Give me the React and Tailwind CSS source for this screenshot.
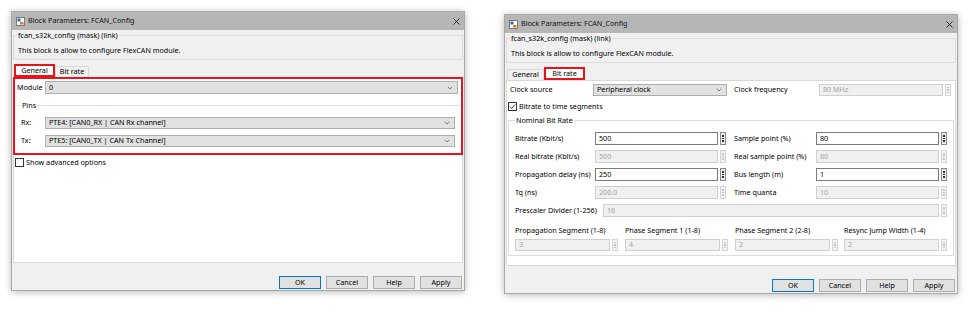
import React from 'react';

const Chevron = () => (
  <svg width="6" height="4" viewBox="0 0 6 4" className="shrink-0">
    <path d="M0.8 0.8 L3 3 L5.2 0.8" fill="none" stroke="#707070" strokeWidth="0.9" />
  </svg>
);

const Combo = ({ value, className = '' }) => (
  <div className={`flex items-center justify-between bg-[#e1e1e1] border border-[#adadad] pl-[3px] pr-[4px] ${className}`}>
    <span>{value}</span>
    <Chevron />
  </div>
);

const Dots = ({ disabled }) => (
  <div className={`w-[6px] h-full shrink-0 border flex flex-col items-center justify-center gap-[1px] ${disabled ? 'border-[#d4d4d4] bg-[#f3f3f3]' : 'border-[#8a8a8a] bg-[#ececec]'}`}>
    {[0, 1, 2].map(i => (
      <span key={i} className={`w-[1.5px] h-[1.5px] ${disabled ? 'bg-[#c4c4c4]' : 'bg-[#333333]'}`} />
    ))}
  </div>
);

const Field = ({ value, disabled, className = '' }) => (
  <div className={`flex items-stretch gap-[2px] h-[13px] ${className}`}>
    <div className={`flex-1 flex items-center pl-[3px] border ${disabled ? 'bg-[#f0f0f0] border-[#cfcfcf] text-[#a3a3a3]' : 'bg-white border-[#7a7a7a] text-black'}`}>
      {value}
    </div>
    <Dots disabled={disabled} />
  </div>
);

const Check = ({ checked }) => (
  <div className="w-[9px] h-[9px] shrink-0 border border-[#333333] bg-white flex items-center justify-center">
    {checked && (
      <svg width="7" height="7" viewBox="0 0 7 7">
        <path d="M0.8 3.6 L2.7 5.4 L6.2 1.4" fill="none" stroke="#222222" strokeWidth="0.9" />
      </svg>
    )}
  </div>
);

const BlockIcon = () => (
  <svg width="9" height="9" viewBox="0 0 9 9" className="shrink-0">
    <rect x="0.5" y="0.5" width="8" height="8" fill="#ffffff" stroke="#7a7a7a" />
    <rect x="1.5" y="1.5" width="3" height="3" fill="#2f6db5" />
    <path d="M4 5 L7.5 5 L7.5 7.5 L4 7.5 Z" fill="#e07a22" />
  </svg>
);

const CloseX = () => (
  <svg width="7" height="7" viewBox="0 0 7 7" className="shrink-0">
    <path d="M0.5 0.5 L6.5 6.5 M6.5 0.5 L0.5 6.5" stroke="#222222" strokeWidth="0.9" />
  </svg>
);

const Tab = ({ label, active, width }) => (
  <div
    className={`flex items-center justify-center ${width} ${active ? 'h-[13px] bg-white border-2 border-[#e8141c]' : 'h-[11px] bg-[#f0f0f0] border border-b-0 border-[#d9d9d9]'}`}
  >
    {label}
  </div>
);

const Dialog = ({ className = '', active, children }) => (
  <div className={`w-[454px] h-[280px] shrink-0 flex flex-col bg-[#f0f0f0] border border-[#a9a9a9] shadow-[0_1px_7px_rgba(0,0,0,0.28)] ${className}`}>
    <div className="h-[18px] shrink-0 bg-[#b6b6b6] flex items-center pl-[4px] pr-[4px]">
      <BlockIcon />
      <span className="ml-[3px] text-[#111111]">Block Parameters: FCAN_Config</span>
      <span className="ml-auto"><CloseX /></span>
    </div>
    <div className="flex-1 flex flex-col px-[1px]">
      <fieldset className="h-[30px] shrink-0 border border-[#dcdcdc] px-[4px]">
        <legend className="-ml-[1px] px-[1px] h-[10px] leading-[10px]">fcan_s32k_config (mask) (link)</legend>
        <div className="mt-[5px] h-[10px] leading-[10px]">This block is allow to configure FlexCAN module.</div>
      </fieldset>
      <div className="mt-[4px] h-[13px] shrink-0 flex items-end pl-[1px]">
        {active === 'general' ? (
          <>
            <Tab label="General" active width="w-[41px]" />
            <Tab label="Bit rate" width="w-[34px]" />
          </>
        ) : (
          <>
            <Tab label="General" width="w-[37px]" />
            <Tab label="Bit rate" active width="w-[41px]" />
          </>
        )}
      </div>
      <div className="h-[186px] shrink-0 bg-white border border-[#d9d9d9]">{children}</div>
      <div className="flex-1 flex items-end justify-end gap-[5px] pb-[1px] pr-[1px]">
        {['OK', 'Cancel', 'Help', 'Apply'].map(b => (
          <div
            key={b}
            className={`w-[42px] h-[13px] flex items-center justify-center bg-[#e1e1e1] border ${b === 'OK' ? 'border-[#0078d7]' : 'border-[#adadad]'}`}
          >
            {b}
          </div>
        ))}
      </div>
    </div>
  </div>
);

const GeneralPanel = () => (
  <div className="flex flex-col">
    <div className="-mx-[1px] -mt-[1px] border-2 border-[#e8141c] pl-[2px] pt-[2px] pb-[6px]">
      <div className="flex items-center h-[13px]">
        <span className="w-[28px]">Module</span>
        <Combo value="0" className="w-[413px] h-[13px]" />
      </div>
      <fieldset className="mt-[6px] border-t border-[#e3e3e3] pl-[4px]">
        <legend className="px-[1px] h-[10px] leading-[10px]">Pins</legend>
        <div className="mt-[7px] flex items-center h-[12px]">
          <span className="w-[24px]">Rx:</span>
          <Combo value="PTE4: [CAN0_RX | CAN Rx channel]" className="w-[410px] h-[12px]" />
        </div>
        <div className="mt-[6px] flex items-center h-[12px]">
          <span className="w-[24px]">Tx:</span>
          <Combo value="PTE5: [CAN0_TX | CAN Tx Channel]" className="w-[410px] h-[12px]" />
        </div>
      </fieldset>
    </div>
    <div className="mt-[3px] pl-[1px] flex items-center gap-[2px] h-[9px]">
      <Check />
      <span>Show advanced options</span>
    </div>
  </div>
);

const Pair = ({ label, value, disabled, labelW, fieldW }) => (
  <div className="flex items-center">
    <span className={`${labelW} shrink-0 whitespace-nowrap`}>{label}</span>
    <Field value={value} disabled={disabled} className={fieldW} />
  </div>
);

const BitRatePanel = () => (
  <div className="flex flex-col px-[1px]">
    <div className="mt-[3px] pl-[2px] flex items-center h-[12px]">
      <span className="w-[83px]">Clock source</span>
      <Combo value="Peripheral clock" className="w-[134px] h-[12px]" />
      <span className="ml-[7px] w-[85px]">Clock frequency</span>
      <Field value="80 MHz" disabled className="w-[132px] !h-[12px]" />
    </div>
    <div className="mt-[6px] flex items-center gap-[2px] h-[9px]">
      <Check checked />
      <span>Bitrate to time segments</span>
    </div>
    <fieldset className="mt-[4px] border border-[#dcdcdc] pl-[6px] pb-[4px]">
      <legend className="px-[1px] h-[10px] leading-[10px]">Nominal Bit Rate</legend>
      <div className="mt-[7px] flex flex-col gap-[5px]">
        <div className="flex">
          <Pair label="Bitrate (Kbit/s)" value="500" labelW="w-[80px]" fieldW="w-[131px]" />
          <div className="ml-[8px]"><Pair label="Sample point (%)" value="80" labelW="w-[82px]" fieldW="w-[131px]" /></div>
        </div>
        <div className="flex">
          <Pair label="Real bitrate (Kbit/s)" value="500" disabled labelW="w-[80px]" fieldW="w-[131px]" />
          <div className="ml-[8px]"><Pair label="Real sample point (%)" value="80" disabled labelW="w-[82px]" fieldW="w-[131px]" /></div>
        </div>
        <div className="flex">
          <Pair label="Propagation delay (ns)" value="250" labelW="w-[80px]" fieldW="w-[131px]" />
          <div className="ml-[8px]"><Pair label="Bus length (m)" value="1" labelW="w-[82px]" fieldW="w-[131px]" /></div>
        </div>
        <div className="flex">
          <Pair label="Tq (ns)" value="200.0" disabled labelW="w-[80px]" fieldW="w-[131px]" />
          <div className="ml-[8px]"><Pair label="Time quanta" value="10" disabled labelW="w-[82px]" fieldW="w-[131px]" /></div>
        </div>
        <Pair label="Prescaler Divider (1-256)" value="16" disabled labelW="w-[88px]" fieldW="w-[344px]" />
      </div>
      <div className="mt-[8px] grid grid-cols-[110px_110px_109px_103px]">
        {[
          ['Propagation Segment (1-8)', '3'],
          ['Phase Segment 1 (1-8)', '4'],
          ['Phase Segment 2 (2-8)', '2'],
          ['Resync Jump Width (1-4)', '2'],
        ].map(([label, value]) => (
          <div key={label} className="flex flex-col">
            <span className="h-[10px] leading-[10px] whitespace-nowrap">{label}</span>
            <Field value={value} disabled className="mt-[4px] w-[103px] !h-[12px]" />
          </div>
        ))}
      </div>
    </fieldset>
  </div>
);

export default function App() {
  return (
    <div className="w-[975px] h-[311px] bg-white flex items-start pl-[11px] pt-[11px] font-['Noto_Sans',sans-serif] text-[7.2px] leading-none text-black">
      <Dialog active="general">
        <GeneralPanel />
      </Dialog>
      <Dialog active="bitrate" className="ml-[39px] mt-[3px]">
        <BitRatePanel />
      </Dialog>
    </div>
  );
}
